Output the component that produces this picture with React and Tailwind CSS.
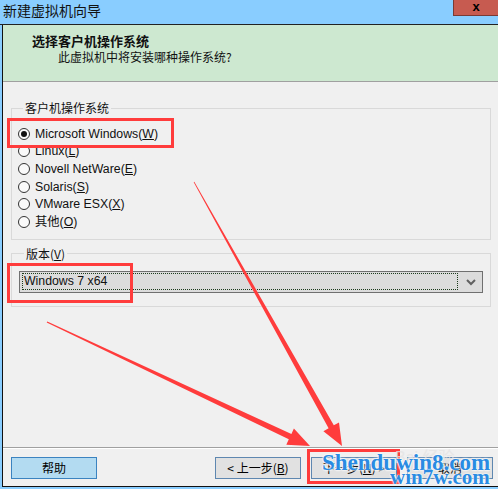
import React from 'react';

const cjk = { fontFamily: '"Noto Sans CJK SC", "Microsoft YaHei", sans-serif' };
const ui = { fontFamily: '"Liberation Sans", "Noto Sans CJK SC", sans-serif' };

const osList = [
  { label: 'Microsoft Windows', key: 'W', checked: true },
  { label: 'Linux', key: 'L' },
  { label: 'Novell NetWare', key: 'E' },
  { label: 'Solaris', key: 'S' },
  { label: 'VMware ESX', key: 'X' },
  { label: '其他', key: 'O' },
];

const Radio = ({ label, hotkey, checked }) => (
  <div className="flex items-center h-[17.6px]">
    <span className="w-[12px] h-[12px] rounded-full border border-[#333] bg-[#fafafa] flex items-center justify-center">
      {checked && <span className="w-[6px] h-[6px] rounded-full bg-[#111]" />}
    </span>
    <span className="ml-[5px] text-[12.3px] text-[#111] leading-[16px]" style={ui}>
      {label}(<span className="underline">{hotkey}</span>)
    </span>
  </div>
);

const Btn = ({ children, primary }) => (
  <button
    className={`w-[86px] h-[22px] text-[12px] text-black flex items-center justify-center border ${
      primary ? 'bg-[#B3DBF1] border-[#3B83C0]' : 'bg-[#E1E1E1] border-[#5E87B0]'
    }`}
    style={cjk}
  >
    {children}
  </button>
);

export default function App() {
  return (
    <div className="w-[498px] h-[489px] relative overflow-hidden bg-[#F0F0F0] flex flex-col">
      {/* title bar */}
      <div className="h-[25px] bg-[#89CDFF] border-b border-[#222] flex justify-between">
        <span className="pl-[3px] text-[14px] leading-[20px] text-[#111]" style={cjk}>新建虚拟机向导</span>
        <div className="w-[45px] h-[16px] bg-[#C75B50] border-l border-b border-[#7A3A34] flex items-center justify-center">
          <span className="text-[13px] font-bold leading-none text-black -mt-[2px]" style={ui}>x</span>
        </div>
      </div>

      {/* window frame */}
      <div className="flex-1 border-l-2 border-b-2 border-[#89CDFF] flex flex-col min-h-0">
        <div className="flex-1 border-l border-b border-[#111] flex flex-col min-h-0">
          {/* header */}
          <div className="h-[57px] bg-[#CDE8D0] border-b border-[#A0A0A0] pt-[8px] pl-[29px]" style={cjk}>
            <div className="text-[13px] font-bold leading-[16px] text-[#111]">选择客户机操作系统</div>
            <div className="text-[12px] leading-[16px] text-[#111] pl-[26px]">此虚拟机中将安装哪种操作系统?</div>
          </div>

          {/* body */}
          <div className="flex-1 pt-[18px] pl-[8px] pr-[7px]">
            <fieldset className="border border-[#D9D9D9] pt-[9px] pb-[8px] pl-[6px]">
              <legend className="ml-[5px] px-[2px] text-[12px] leading-[16px] text-[#111]" style={cjk}>客户机操作系统</legend>
              {osList.map((o) => (
                <Radio key={o.key} label={o.label} hotkey={o.key} checked={o.checked} />
              ))}
            </fieldset>

            <fieldset className="mt-[6px] border border-[#D9D9D9] pt-[9px] pb-[13px] px-[7px]">
              <legend className="ml-[5px] px-[2px] text-[12px] leading-[16px] text-[#111]" style={cjk}>
                版本(<span className="underline">V</span>)
              </legend>
              <div className="h-[22px] bg-[#DCDCDC] border border-[#707070] flex items-center pl-[2px] pr-[6px]">
                <div className="flex-1 h-[17px] border border-dotted border-[#1C3A1C] flex items-center pl-[1px] text-[12.3px] text-[#111]" style={ui}>
                  Windows 7 x64
                </div>
                <svg width="10" height="8" viewBox="0 0 10 8" className="ml-[8px]">
                  <path d="M1 2 L5 6 L9 2" stroke="#606060" strokeWidth="2" fill="none" />
                </svg>
              </div>
            </fieldset>
          </div>

          {/* footer */}
          <div className="border-t border-[#A0A0A0]">
            <div className="border-t border-white pt-[8px] pb-[7px] pl-[8px] pr-[5px] flex">
              <Btn primary>帮助</Btn>
              <div className="ml-auto flex gap-[10px]">
                <Btn>&lt; 上一步(<span className="underline">B</span>)</Btn>
                <Btn>下一步(<span className="underline">N</span>) &gt;</Btn>
                <Btn>取消</Btn>
              </div>
            </div>
          </div>
        </div>
      </div>

      {/* annotations */}
      <div className="absolute left-[7px] top-[118px] w-[167px] h-[30px] border-[3px] border-[#FF3C3C]" />
      <div className="absolute left-[7px] top-[263px] w-[126px] h-[40px] border-[3px] border-[#FF3C3C]" />
      <svg className="absolute inset-0 pointer-events-none" width="498" height="489">
        <polygon
          fill="#FF3C3C"
          points="193.7,182.15 328.6,428.3 323.4,431.2 342,446 339,422.4 333.8,425.3 194.3,181.85"
        />
        <polygon
          fill="#FF3C3C"
          points="46.7,322.6 288.8,439.3 286.3,444.7 310,446 293.9,428.5 291.4,433.9 47.3,321.4"
        />
      </svg>
      <div className="absolute left-[307px] top-[449px] w-[93px] h-[35px] border-[3px] border-[#FF3C3C]" />

      {/* watermark */}
      <div className="absolute left-[395px] top-[446px] text-[16px] text-[#e4e4e4] opacity-80" style={ui}>Bai 经验</div>
      <div
        className="absolute left-[322px] top-[450px] text-[23px] font-bold leading-[26px] text-[#2A8BE2] [text-shadow:0_0_2px_#fff,0_0_2px_#fff,0_0_2px_#fff]"
        style={{ fontFamily: '"Liberation Serif", serif' }}
      >
        Shenduwin8.com
      </div>
      <div
        className="absolute left-[390px] top-[467px] text-[21px] font-bold leading-[20px] text-[#2A8BE2] [text-shadow:0_0_2px_#fff,0_0_2px_#fff]"
        style={{ fontFamily: '"Liberation Serif", serif' }}
      >
        win7w.com
      </div>
    </div>
  );
}
